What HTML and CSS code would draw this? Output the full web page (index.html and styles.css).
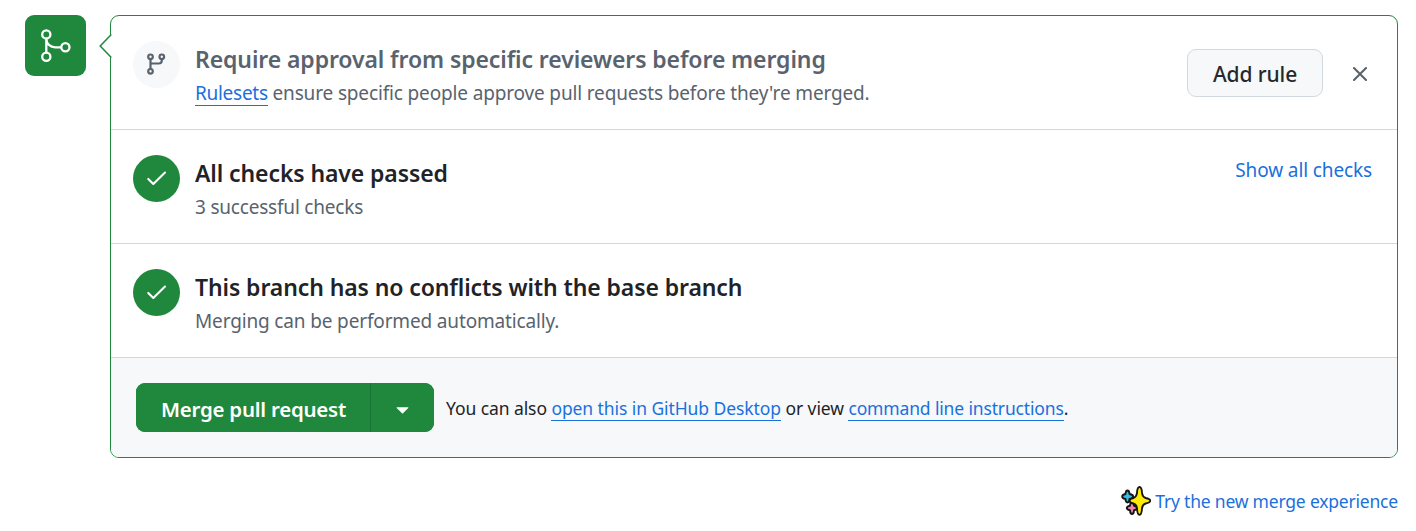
FILE: index.html
```
<!DOCTYPE html>
<html lang="en">
<head>
<meta charset="utf-8">
<title>Merge pull request</title>
<link rel="stylesheet" href="styles.css">
</head>
<body>
<main class="merge">
  <div class="avatar">
    <svg viewBox="0 0 61 61" width="61" height="61" fill="none" stroke="#fff" stroke-width="2.300">
      <circle cx="21.300" cy="19.400" r="4.100"/><circle cx="21.300" cy="41.800" r="4.100"/><circle cx="40.400" cy="32.300" r="4.100"/>
      <path d="M21.300 23.500v14.200M21.300 23.500c0 5.500 4 8.800 9 8.800h6"/>
    </svg>
  </div>
  <div class="content">
    <section class="panel">
      <svg class="pointer" viewBox="0 0 13 26" width="13" height="26"><path class="pointer-fill" d="M13 1.200L1.200 13 13 24.800z"/><path d="M12.300 1.500L1.200 13l11.100 11.500" fill="none" stroke="#1f883d" stroke-width="1.500"/></svg>
      <div class="row">
        <span class="status muted">
          <svg viewBox="0 0 47 47" width="47" height="47" fill="none" stroke="#59636e" stroke-width="2.200">
            <circle cx="17.500" cy="15.800" r="2.300"/><circle cx="28.800" cy="15.800" r="2.300"/><circle cx="17.500" cy="30.300" r="2.300"/>
            <path d="M17.500 18.300v9.500M28.800 18.300v1.200q0 3-3 3h-8.300"/>
          </svg>
        </span>
        <div class="text">
          <h3 class="title subdued">Require approval from specific reviewers before merging</h3>
          <p class="desc"><a class="underlined rulesets">Rulesets</a> ensure specific people approve pull requests before they're merged.</p>
        </div>
        <div class="actions">
          <button class="add">Add rule</button>
          <svg class="close" viewBox="0 0 14 14" width="14" height="14"><path d="M1 1l12 12M13 1L1 13" stroke="#59636e" stroke-width="2.100" stroke-linecap="round"/></svg>
        </div>
      </div>
      <div class="row">
        <span class="status passed">
          <svg viewBox="0 0 47 47" width="47" height="47"><path d="M15.300 23.900l5 5L32 17.600" fill="none" stroke="#fff" stroke-width="2.100" stroke-linecap="round" stroke-linejoin="round"/></svg>
        </span>
        <div class="text">
          <h3 class="title">All checks have passed</h3>
          <p class="desc desc-tight">3 successful checks</p>
        </div>
        <a class="show">Show all checks</a>
      </div>
      <div class="row">
        <span class="status passed">
          <svg viewBox="0 0 47 47" width="47" height="47"><path d="M15.300 23.900l5 5L32 17.600" fill="none" stroke="#fff" stroke-width="2.100" stroke-linecap="round" stroke-linejoin="round"/></svg>
        </span>
        <div class="text">
          <h3 class="title">This branch has no conflicts with the base branch</h3>
          <p class="desc">Merging can be performed automatically.</p>
        </div>
      </div>
      <div class="footer">
        <div class="split">
          <button class="merge-button">Merge pull request</button>
          <button class="caret" aria-label="Select merge method"><svg viewBox="0 0 13 7" width="13" height="7"><path d="M1 .3h11q.7 0 .3.600L7 6.200q-.5.500-1 0L.7.900Q.3.300 1 .300z" fill="#fff"/></svg></button>
        </div>
        <p class="hint">You can also <a class="underlined">open this in GitHub Desktop</a> or view <a class="underlined">command line instructions</a>.</p>
      </div>
    </section>
    <div class="try">
      <svg viewBox="0 0 30 30" width="30" height="30" stroke="#151515" stroke-width="1.900" stroke-linejoin="round">
        <path fill="#35bde0" d="M6.500 4.500Q8.300 4.500 8.500 8q3.700.7 3.700 2.500T8.500 13q-.2 3.500-2 3.500T4.500 13Q1.200 12.300 1.200 10.500T4.500 8q.2-3.500 2-3.500z"/>
        <path fill="#ef86b5" d="M11 16.500q1.700 0 2 3.200 3 .7 3 2.300t-3 2.300q-.3 3.700-2 3.700t-2-3.700Q5.800 23.600 5.800 22T9 19.700q.3-3.200 2-3.200z"/>
        <path fill="#ffeb00" d="M18.500 1Q20.700 1 21 7q.5 4 3.700 5 4.500.9 4.500 2.700t-4.500 2.800q-3.200.9-3.700 4.800-.3 6.500-2.500 6.500T16 22.300q-.5-3.900-3.700-4.800-3.800-1-3.800-2.800t3.800-2.700q3.200-1 3.700-5Q16.300 1 18.500 1z"/>
      </svg>
      <a>Try the new merge experience</a>
    </div>
  </div>
</main>
</body>
</html>
```
FILE: styles.css
```
* { box-sizing: border-box; }
body { margin: 0; background: #fff; color: #1f2328; font-family: "Noto Sans", sans-serif; }
h3, p { margin: 0; white-space: nowrap; }
svg { display: block; }
a { color: #1a70dd; white-space: nowrap; }
button { font-family: inherit; padding: 0; white-space: nowrap; }
.merge { display: flex; gap: 24px; padding: 15px 18px 0 25px; }
.avatar { width: 61px; height: 61px; border-radius: 9px; background: #1f883d; flex: none; }
.content { flex: 1; }
.panel { position: relative; height: 443px; border: 1px solid #1f883d; border-radius: 9px; background: #fff; }
.pointer { position: absolute; left: -12px; top: 17px; }
.pointer-fill { fill: #fff; }
.row { display: flex; height: 114px; padding: 25px 25px 0 22px; border-bottom: 1px solid #d1d9e0; }
.status { width: 47px; height: 47px; border-radius: 50%; flex: none; }
.muted { background: #f6f8fa; }
.passed { background: #1f883d; }
.text { flex: 1; margin-left: 15px; padding-top: 1px; }
.title { font-size: 23px; line-height: 34px; font-weight: 600; letter-spacing: -0.100px; }
.subdued { color: #59636e; }
.desc { color: #59636e; font-size: 19px; line-height: 34px; letter-spacing: -0.150px; }
.desc-tight { letter-spacing: -0.200px; }
.underlined { display: inline-block; line-height: 23px; border-bottom: 1px solid #1a70dd; }
.rulesets { letter-spacing: -0.280px; }
.actions { display: flex; align-items: center; height: 48px; margin-top: 8px; gap: 30px; padding-right: 5px; }
.close { position: relative; top: 1px; }
.add { width: 136px; height: 48px; border: 1px solid #d1d9e0; border-radius: 9px; background: #f6f8fa; color: #25292e; font-size: 21px; font-weight: 500; padding-top: 2px; letter-spacing: -0.100px; }
.show { font-size: 19px; line-height: 31px; letter-spacing: -0.120px; }
.footer { display: flex; align-items: center; gap: 12px; height: 99px; padding-left: 25px; background: #f6f8fa; border-radius: 0 0 8px 8px; }
.split { display: flex; width: 298px; height: 49px; border-radius: 9px; overflow: hidden; background: #1f883d; }
.merge-button { width: 235px; border: 0; border-right: 1px solid #1a7435; background: #1f883d; color: #fff; font-size: 20.500px; font-weight: 600; letter-spacing: -0.250px; padding: 3px 0 0 1px; }
.caret { flex: 1; border: 0; background: #1f883d; display: flex; align-items: center; justify-content: center; padding-top: 6px; }
.hint { font-size: 17.500px; letter-spacing: -0.080px; padding-top: 1px; }
.hint .underlined + .underlined { letter-spacing: -0.150px; }
.try { display: flex; justify-content: flex-end; align-items: center; margin-top: 28px; height: 30px; font-size: 17.500px; letter-spacing: -0.200px; gap: 4px; }
```
